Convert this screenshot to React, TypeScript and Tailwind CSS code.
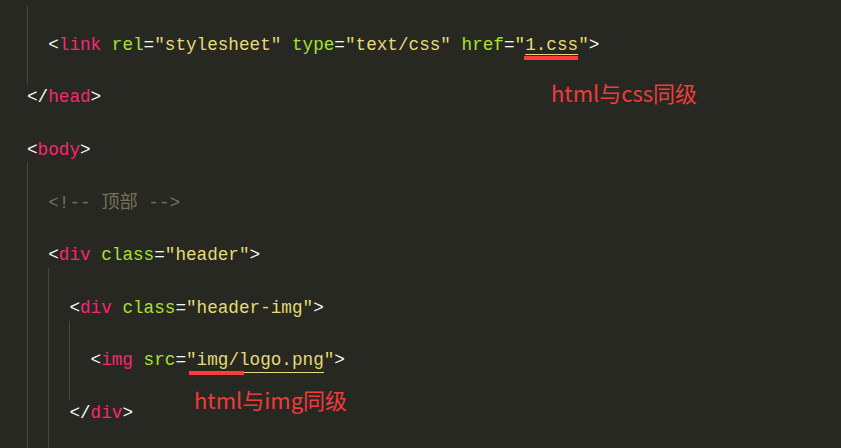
type Token = { text: string; color: string; mark?: "css" | "img" | "cjk" };

interface Line {
  indent: number;
  guides: number;
  tokens: Token[];
}

const P = "text-[#f8f8f2]";
const TAG = "text-[#f92672]";
const ATTR = "text-[#a6e22e]";
const STR = "text-[#e6db74]";
const COMMENT = "text-[#75715e]";

const lines: Line[] = [
  { indent: 0, guides: 1, tokens: [] },
  {
    indent: 1,
    guides: 1,
    tokens: [
      { text: "<", color: P },
      { text: "link", color: TAG },
      { text: " ", color: P },
      { text: "rel", color: ATTR },
      { text: "=", color: P },
      { text: '"stylesheet"', color: STR },
      { text: " ", color: P },
      { text: "type", color: ATTR },
      { text: "=", color: P },
      { text: '"text/css"', color: STR },
      { text: " ", color: P },
      { text: "href", color: ATTR },
      { text: "=", color: P },
      { text: '"', color: STR },
      { text: "1.css", color: STR, mark: "css" },
      { text: '"', color: STR },
      { text: ">", color: P },
    ],
  },
  { indent: 0, guides: 1, tokens: [] },
  {
    indent: 0,
    guides: 0,
    tokens: [
      { text: "</", color: P },
      { text: "head", color: TAG },
      { text: ">", color: P },
    ],
  },
  { indent: 0, guides: 0, tokens: [] },
  {
    indent: 0,
    guides: 0,
    tokens: [
      { text: "<", color: P },
      { text: "body", color: TAG },
      { text: ">", color: P },
    ],
  },
  { indent: 0, guides: 1, tokens: [] },
  {
    indent: 1,
    guides: 1,
    tokens: [
      { text: "<!-- ", color: COMMENT },
      { text: "顶部", color: COMMENT, mark: "cjk" },
      { text: " -->", color: COMMENT },
    ],
  },
  { indent: 0, guides: 1, tokens: [] },
  {
    indent: 1,
    guides: 1,
    tokens: [
      { text: "<", color: P },
      { text: "div", color: TAG },
      { text: " ", color: P },
      { text: "class", color: ATTR },
      { text: "=", color: P },
      { text: '"header"', color: STR },
      { text: ">", color: P },
    ],
  },
  { indent: 0, guides: 2, tokens: [] },
  {
    indent: 2,
    guides: 2,
    tokens: [
      { text: "<", color: P },
      { text: "div", color: TAG },
      { text: " ", color: P },
      { text: "class", color: ATTR },
      { text: "=", color: P },
      { text: '"header-img"', color: STR },
      { text: ">", color: P },
    ],
  },
  { indent: 0, guides: 3, tokens: [] },
  {
    indent: 3,
    guides: 3,
    tokens: [
      { text: "<", color: P },
      { text: "img", color: TAG },
      { text: " ", color: P },
      { text: "src", color: ATTR },
      { text: "=", color: P },
      { text: '"', color: STR },
      { text: "img/logo.png", color: STR, mark: "img" },
      { text: '"', color: STR },
      { text: ">", color: P },
    ],
  },
  { indent: 0, guides: 3, tokens: [] },
  {
    indent: 2,
    guides: 2,
    tokens: [
      { text: "</", color: P },
      { text: "div", color: TAG },
      { text: ">", color: P },
    ],
  },
  { indent: 0, guides: 2, tokens: [] },
];

function CodeLine({ line }: { line: Line }) {
  const cells = Math.max(line.indent, line.guides);
  return (
    <div className="flex h-[26.29px] items-stretch whitespace-pre pl-[27px]">
      {Array.from({ length: cells }).map((_, i) => (
        <span
          key={i}
          className={`w-[21.2px] shrink-0 ${i < line.guides ? "border-l border-[#48483f]" : ""}`}
        />
      ))}
      <span className="self-center">
        {line.tokens.map((t, i) => {
          if (t.mark === "css") {
            return (
              <span
                key={i}
                className={`${t.color} underline decoration-[#e6db74] underline-offset-[4px]`}
              >
                {t.text}
              </span>
            );
          }
          if (t.mark === "img") {
            return (
              <span
                key={i}
                className={`${t.color} -ml-[8px] border-b border-[#e6db74] pb-[2px] pl-[8px]`}
              >
                {t.text}
              </span>
            );
          }
          if (t.mark === "cjk") {
            return (
              <span key={i} className={`${t.color} text-[18.3px]`}>
                {t.text}
              </span>
            );
          }
          return (
            <span key={i} className={t.color}>
              {t.text}
            </span>
          );
        })}
      </span>
    </div>
  );
}

export default function App() {
  return (
    <div className="relative h-[448px] w-[841px] overflow-hidden bg-[#272822]">
      <div className="pt-[5.6px] font-['Liberation_Mono','Noto_Sans_CJK_SC',monospace] text-[17.67px] leading-[26.29px]">
        {lines.map((line, i) => (
          <CodeLine key={i} line={line} />
        ))}
      </div>

      {/* red annotations drawn over the editor screenshot */}
      <div className="absolute left-[524px] top-[56px] h-[4px] w-[54px] bg-[#ff3b3b]" />
      <div className="absolute left-[551px] top-[81px] font-['Noto_Sans_CJK_SC',sans-serif] text-[22px] leading-[22px] text-[#f03b3b]">
        html与css同级
      </div>
      <div className="absolute left-[189px] top-[371px] h-[4px] w-[55px] bg-[#ff3b3b]" />
      <div className="absolute left-[194px] top-[388px] font-['Noto_Sans_CJK_SC',sans-serif] text-[22px] leading-[22px] text-[#f03b3b]">
        html与img同级
      </div>
    </div>
  );
}
